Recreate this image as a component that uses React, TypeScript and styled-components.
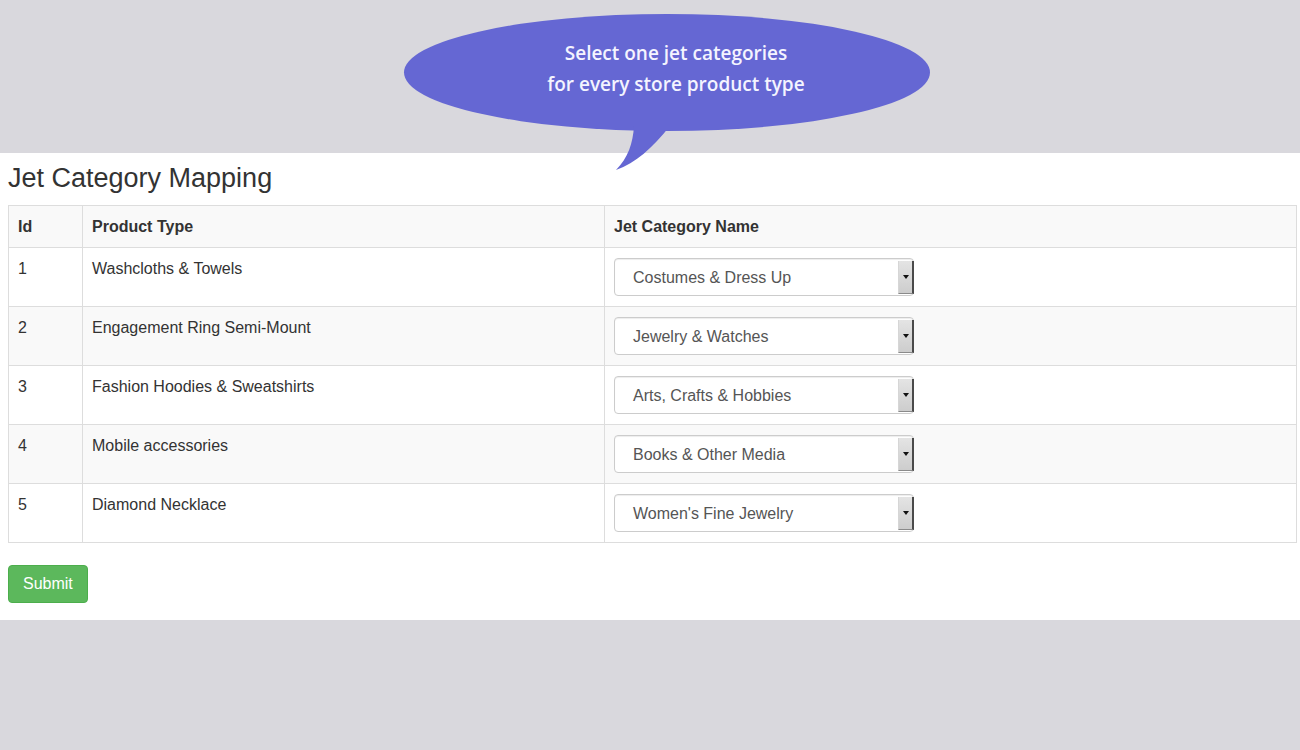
import React from "react";
import styled, { createGlobalStyle } from "styled-components";

const GlobalStyle = createGlobalStyle`
  html, body { margin: 0; padding: 0; }
  body {
    background: #d9d8dd;
    font-family: "Liberation Sans", Arial, Helvetica, sans-serif;
    color: #333;
    width: 1300px;
    height: 750px;
    overflow: hidden;
  }
`;

const Page = styled.div`
  position: relative;
  width: 1300px;
  min-height: 750px;
  display: flex;
  flex-direction: column;
`;

const TopBand = styled.div`
  height: 153px;
`;

const Panel = styled.section`
  background: #ffffff;
  padding: 10px 3px 17px 8px;
  display: flex;
  flex-direction: column;
  align-items: flex-start;
`;

const Title = styled.h3`
  margin: 0 0 12px;
  font-size: 27px;
  line-height: 30px;
  font-weight: 400;
  color: #333;
`;

const Table = styled.table`
  width: 1289px;
  table-layout: fixed;
  border-collapse: collapse;
  font-size: 16px;
  margin-bottom: 22px;
`;

const Col = styled.col<{ $w?: number }>`
  width: ${(p) => (p.$w ? `${p.$w}px` : "auto")};
`;

const HeadCell = styled.th`
  text-align: left;
  font-weight: 700;
  padding: 10px 9px;
  line-height: 21px;
  border: 1px solid #ddd;
  background: #f9f9f9;
`;

const Row = styled.tr<{ $striped: boolean }>`
  background: ${(p) => (p.$striped ? "#f9f9f9" : "#ffffff")};
`;

const Cell = styled.td`
  padding: 10px 9px;
  line-height: 21px;
  vertical-align: top;
  border: 1px solid #ddd;
  color: #333;
`;

const SelectBox = styled.div`
  position: relative;
  width: 300px;
  height: 38px;
  box-sizing: border-box;
  border: 1px solid #ccc;
  border-radius: 4px;
  background: #fff;
  box-shadow: inset 0 1px 1px rgba(0, 0, 0, 0.075);
  display: flex;
  align-items: center;
  padding-left: 18px;
  color: #555;
  font-size: 16px;
`;

const ArrowButton = styled.span`
  position: absolute;
  right: -1px;
  top: 2px;
  bottom: 1px;
  width: 16px;
  box-sizing: border-box;
  background: linear-gradient(#e4e4e4, #cdcdcd);
  border-right: 2px solid #4a4a4a;
  border-bottom: 1px solid #8a8a8a;
  border-left: 1px solid #d6d6d6;
  display: flex;
  align-items: center;
  justify-content: center;
  &::after {
    content: "";
    border-left: 3px solid transparent;
    border-right: 3px solid transparent;
    border-top: 4px solid #111;
  }
`;

const SubmitButton = styled.button`
  height: 38px;
  padding: 0 14px;
  font-family: "Liberation Sans", Arial, sans-serif;
  font-size: 16px;
  color: #fff;
  background: #5cb85c;
  border: 1px solid #4cae4c;
  border-radius: 4px;
`;

const Bubble = styled.div`
  position: absolute;
  left: 0;
  top: 0;
  width: 1300px;
  height: 175px;
  pointer-events: none;
`;

const BubbleShape = styled.svg`
  position: absolute;
  left: 0;
  top: 0;
`;

const BubbleText = styled.div`
  position: absolute;
  left: 476px;
  top: 38px;
  width: 400px;
  text-align: center;
  font-family: "Open Sans", "Noto Sans", sans-serif;
  font-size: 19px;
  font-weight: 600;
  line-height: 31px;
  color: #f4f4ff;
`;

const rows = [
  { id: 1, type: "Washcloths & Towels", cat: "Costumes & Dress Up" },
  { id: 2, type: "Engagement Ring Semi-Mount", cat: "Jewelry & Watches" },
  { id: 3, type: "Fashion Hoodies & Sweatshirts", cat: "Arts, Crafts & Hobbies" },
  { id: 4, type: "Mobile accessories", cat: "Books & Other Media" },
  { id: 5, type: "Diamond Necklace", cat: "Women's Fine Jewelry" },
];

export default function App() {
  return (
    <>
      <GlobalStyle />
      <Page>
        <TopBand />
        <Panel>
          <Title>Jet Category Mapping</Title>
          <Table>
            <colgroup>
              <Col $w={74} />
              <Col $w={522} />
              <Col />
            </colgroup>
            <thead>
              <tr>
                <HeadCell>Id</HeadCell>
                <HeadCell>Product Type</HeadCell>
                <HeadCell>Jet Category Name</HeadCell>
              </tr>
            </thead>
            <tbody>
              {rows.map((r, i) => (
                <Row key={r.id} $striped={i % 2 === 1}>
                  <Cell>{r.id}</Cell>
                  <Cell>{r.type}</Cell>
                  <Cell>
                    <SelectBox>
                      {r.cat}
                      <ArrowButton />
                    </SelectBox>
                  </Cell>
                </Row>
              ))}
            </tbody>
          </Table>
          <SubmitButton>Submit</SubmitButton>
        </Panel>
        <Bubble>
          <BubbleShape width="1300" height="175" viewBox="0 0 1300 175">
            <ellipse cx="667" cy="72.5" rx="263" ry="58.5" fill="#6567d3" />
            <path
              d="M 634 126 C 633 143 628 158 616 170 C 636 163 652 148 670 126 Z"
              fill="#6567d3"
            />
          </BubbleShape>
          <BubbleText>
            Select one jet categories
            <br />
            for every store product type
          </BubbleText>
        </Bubble>
      </Page>
    </>
  );
}
